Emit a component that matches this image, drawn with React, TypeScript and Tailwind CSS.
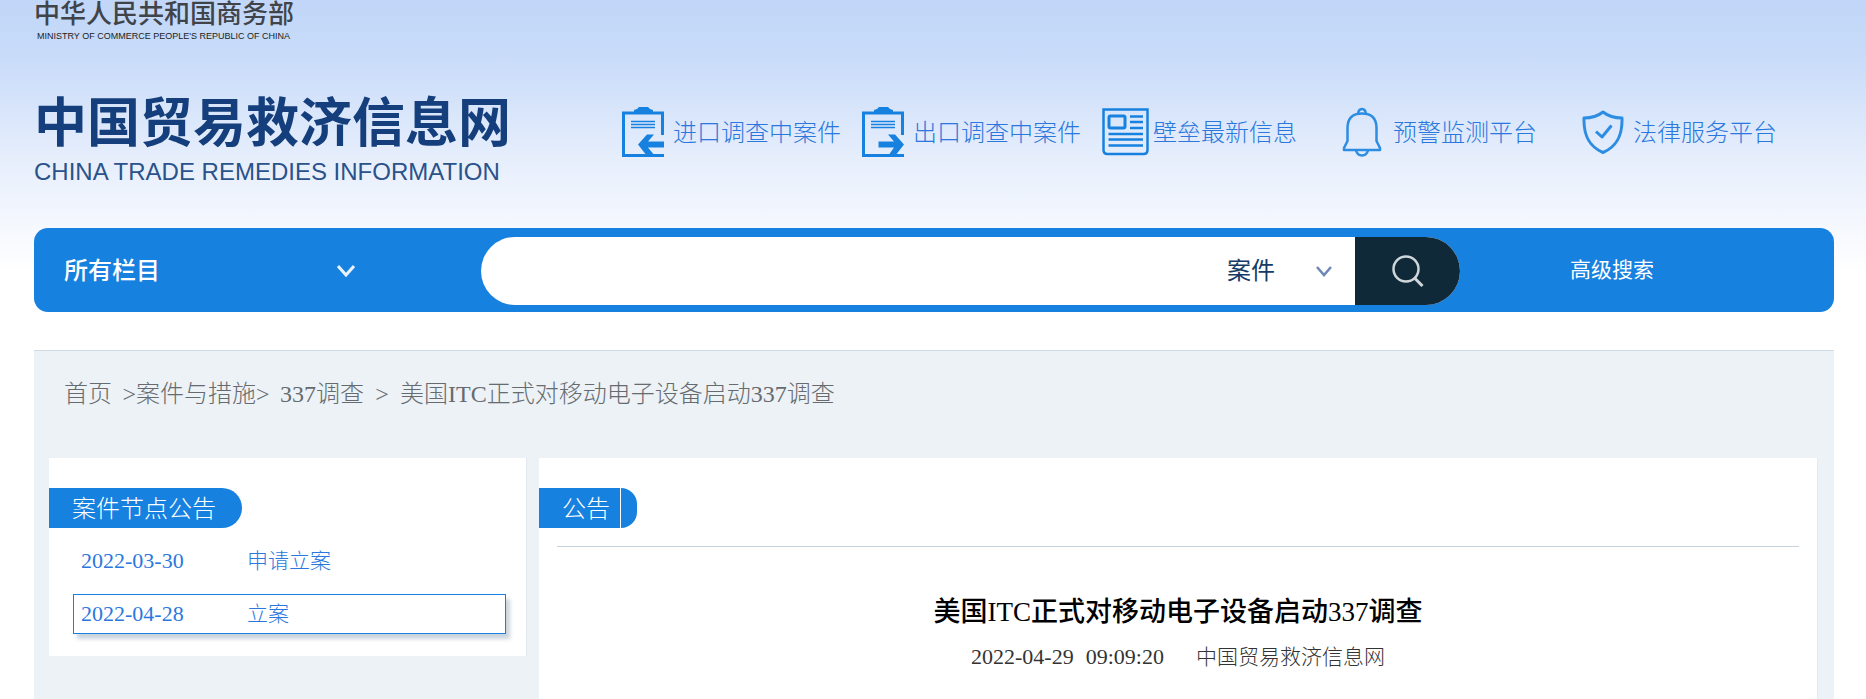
import React, { useState } from 'react'

const ImportIcon = () => (
  <svg width="42" height="50" viewBox="0 0 42 50" fill="none">
    <path d="M40.500 28V6H1.5V48.500H42" stroke="#1781e0" strokeWidth="3" />
    <path d="M12 6V3L15 2L17 0H26L28 2L31 3V6Z" fill="#1781e0" />
    <path d="M9 14.500H33M9 17.500H33M9 20.500H33" stroke="#1781e0" strokeWidth="1.500" />
    <path d="M16 37.500L25 27.500H32L26 34.500H42V40.500H26L33 49H25Z" fill="#1781e0" />
  </svg>
)

const ExportIcon = () => (
  <svg width="42" height="50" viewBox="0 0 42 50" fill="none">
    <path d="M40.500 28V6H1.5V48.500H42" stroke="#1781e0" strokeWidth="3" />
    <path d="M12 6V3L15 2L17 0H26L28 2L31 3V6Z" fill="#1781e0" />
    <path d="M9 14.500H33M9 17.500H33M9 20.500H33" stroke="#1781e0" strokeWidth="1.500" />
    <path d="M42 37.500L33 27.500H26L32 34.500H16.500V40.500H32L26 49H33Z" fill="#1781e0" />
  </svg>
)

const NewsIcon = () => (
  <svg width="48" height="48" viewBox="0 0 48 48" fill="none" stroke="#1781e0">
    <path d="M1.500 1.500H45.500V42Q45.500 46 41.500 46H5.500Q1.500 46 1.500 42Z" strokeWidth="2.500" />
    <rect x="7" y="8" width="16" height="12" rx="1.500" strokeWidth="3" />
    <path d="M28 8.500H41M28 14H41M28 20H41M6.500 26H41M6.500 31.500H41M6.500 37.500H41" strokeWidth="2.500" />
  </svg>
)

const BellIcon = () => (
  <svg width="40" height="50" viewBox="0 0 40 50" fill="none" stroke="#2c8de2" strokeWidth="2.500">
    <path d="M16 7Q16.500 2 20 2Q23.500 2 24 7" />
    <path d="M20 6.500C10 6.500 5.500 12 5.500 21V34L2 41V43H38V41L34.500 34V21C34.500 12 30 6.500 20 6.500Z" strokeLinejoin="round" />
    <path d="M14 43.500C15 47 17 48.500 20 48.500C23 48.500 25 47 26 43.500" />
  </svg>
)

const ShieldIcon = () => (
  <svg width="42" height="44" viewBox="0 0 42 44" fill="none" stroke="#2c8de2" strokeLinejoin="round">
    <path d="M21 2C16 6 9.500 8 2 8C1.500 24 6 36 21 42.500C36 36 40.500 24 40 8C32.500 8 26 6 21 2Z" strokeWidth="3" />
    <path d="M14 21.500L20 27L29.500 15.500" strokeWidth="3" />
  </svg>
)

const navItems = [
  { label: '进口调查中案件', icon: <ImportIcon /> },
  { label: '出口调查中案件', icon: <ExportIcon /> },
  { label: '壁垒最新信息', icon: <NewsIcon /> },
  { label: '预警监测平台', icon: <BellIcon /> },
  { label: '法律服务平台', icon: <ShieldIcon /> },
]

const notices = [
  { date: '2022-03-30', label: '申请立案' },
  { date: '2022-04-28', label: '立案' },
]

const App: React.FC = () => {
  const [column, setColumn] = useState('所有栏目')
  const [type, setType] = useState('案件')
  const [keyword, setKeyword] = useState('')
  const activeDate = '2022-04-28'

  return (
    <div className="flex min-h-screen flex-col bg-[linear-gradient(#c1d6f8_0px,#c8dbf9_56px,#e6eefc_158px,#ffffff_272px)] pl-[34px] pr-8 font-['Liberation_Serif','Noto_Sans_CJK_SC',serif] font-light">
      {/* Header */}
      <header className="flex h-[228px]">
        <div className="w-[588px] shrink-0 font-['Liberation_Sans','Noto_Sans_CJK_SC',sans-serif]">
          <p className="text-[26px] leading-7 font-medium text-[#404448]">中华人民共和国商务部</p>
          <p className="pl-[3px] pt-0.5 text-[9px] leading-3 font-normal text-[#1b1e22]">
            MINISTRY OF COMMERCE PEOPLE'S REPUBLIC OF CHINA
          </p>
          <h1 className="pt-[50px] text-[53px] leading-[64px] font-bold text-[#153f7c]">中国贸易救济信息网</h1>
          <p className="text-[24px] leading-8 font-normal text-[#2a528b]">CHINA TRADE REMEDIES INFORMATION</p>
        </div>
        <nav className="mt-[107px] grid h-[50px] flex-1 grid-cols-5 pr-3">
          {navItems.map(item => (
            <a key={item.label} href="#" className="flex items-center text-2xl whitespace-nowrap text-[#2a78de]">
              <span className="w-[51px] shrink-0">{item.icon}</span>
              <span className="pt-0.5">{item.label}</span>
            </a>
          ))}
        </nav>
      </header>

      {/* Search */}
      <form
        onSubmit={e => e.preventDefault()}
        className="flex h-[84px] items-center rounded-[14px] bg-[#1781e0] pt-0.5 text-white"
      >
        <div className="w-[447px] shrink-0 pl-[30px]">
          <div className="grid w-[291px] items-center">
            <select
              aria-label="栏目"
              value={column}
              onChange={e => setColumn(e.target.value)}
              className="col-start-1 row-start-1 h-12 appearance-none bg-transparent text-2xl font-medium outline-none"
            >
              <option>所有栏目</option>
            </select>
            <svg className="pointer-events-none col-start-1 row-start-1 justify-self-end" width="18" height="12" viewBox="0 0 18 12" fill="none">
              <path d="M1 1L9 10L17 1" stroke="#e8f2fc" strokeWidth="3" />
            </svg>
          </div>
        </div>
        <div className="flex h-[68px] flex-1 overflow-hidden rounded-[34px] bg-white">
          <input
            type="text"
            aria-label="关键词"
            value={keyword}
            onChange={e => setKeyword(e.target.value)}
            className="min-w-0 flex-1 pl-8 text-2xl text-[#153f7c] outline-none"
          />
          <div className="mr-[23px] grid w-[105px] items-center">
            <select
              aria-label="类型"
              value={type}
              onChange={e => setType(e.target.value)}
              className="col-start-1 row-start-1 h-12 appearance-none bg-transparent text-2xl font-normal text-[#153a66] outline-none"
            >
              <option>案件</option>
            </select>
            <svg className="pointer-events-none col-start-1 row-start-1 justify-self-end" width="16" height="11" viewBox="0 0 16 11" fill="none">
              <path d="M1 1L8 9L15 1" stroke="#6d88b4" strokeWidth="2.500" />
            </svg>
          </div>
          <button type="submit" aria-label="搜索" className="flex w-[105px] items-center justify-center bg-[#102938]">
            <svg width="32" height="32" viewBox="0 0 32 32" fill="none" stroke="#cfd6d9" strokeWidth="2.500">
              <circle cx="14" cy="14" r="12.500" />
              <path d="M22.500 23L30.500 31" strokeWidth="3" />
            </svg>
          </button>
        </div>
        <div className="w-[374px] shrink-0 pl-[110px]">
          <a href="#" className="text-[21px] font-normal">高级搜索</a>
        </div>
      </form>

      {/* Content */}
      <main className="mt-[38px] flex flex-1 flex-col border-t border-[#d0dae2] bg-[#edf2f6]">
        <nav className="flex h-[107px] px-[30px] pt-[25px] text-2xl leading-9 text-[#666b70]">
          <a href="#">首页</a>
          <span className="w-6 text-right">&gt;</span>
          <a href="#">案件与措施</a>
          <span className="w-6">&gt;</span>
          <a href="#">337调查</a>
          <span className="w-9 text-center">&gt;</span>
          <span>美国ITC正式对移动电子设备启动337调查</span>
        </nav>

        <div className="flex flex-1 gap-3 pl-[15px] pr-4">
          <aside className="w-[478px] shrink-0 self-start border-r border-[#e3e9ee] bg-white pt-[30px] pb-[22px]">
            <h2 className="h-10 w-[193px] rounded-r-[20px] bg-[#1781e0] pl-[23px] text-2xl leading-[42px] text-white">
              案件节点公告
            </h2>
            <ul className="mt-[13px] mr-5 ml-6 flex flex-col gap-[13px] text-[21px] leading-[38px] text-[#2a78de]">
              {notices.map(notice => (
                <li key={notice.date}>
                  <a
                    href="#"
                    className={
                      notice.date === activeDate
                        ? 'flex border border-[#1781e0] pl-[7px] shadow-[4px_5px_4px_#cbd4dd]'
                        : 'flex border border-transparent pl-[7px]'
                    }
                  >
                    <time className="w-[166px] text-[22px]">{notice.date}</time>
                    <span>{notice.label}</span>
                  </a>
                </li>
              ))}
            </ul>
          </aside>

          <article className="flex-1 border-r border-[#e3e9ee] bg-white pt-[30px]">
            <div className="flex gap-px">
              <h2 className="h-10 w-[81px] bg-[#1781e0] pl-[23px] text-2xl leading-[42px] text-white">公告</h2>
              <span className="w-4 rounded-r-[20px] bg-[#1781e0]"></span>
            </div>
            <hr className="mx-[18px] mt-[18px] border-[#c8d2da]" />
            <h3 className="pt-[45px] text-center text-[27px] leading-10 font-medium text-black">
              美国ITC正式对移动电子设备启动337调查
            </h3>
            <p className="flex justify-center gap-8 pt-[7px] text-[21px] leading-9 text-[#333333]">
              <span className="flex gap-3 text-[22px]">
                <time>2022-04-29</time>
                <time>09:09:20</time>
              </span>
              <span>中国贸易救济信息网</span>
            </p>
          </article>
        </div>
      </main>
    </div>
  )
}

export default App
